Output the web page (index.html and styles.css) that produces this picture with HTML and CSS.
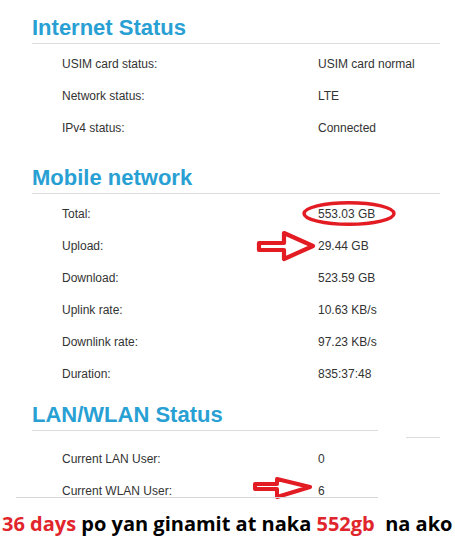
FILE: index.html
```html
<!DOCTYPE html>
<html>
<head>
<meta charset="utf-8">
<link rel="stylesheet" href="styles.css">
</head>
<body>
<div class="page">
  <section class="sec sec-internet">
    <h2 class="head">Internet Status</h2>
    <div class="rows">
      <div class="row"><div class="lbl">USIM card status:</div><div class="val">USIM card normal</div></div>
      <div class="row"><div class="lbl">Network status:</div><div class="val">LTE</div></div>
      <div class="row"><div class="lbl">IPv4 status:</div><div class="val">Connected</div></div>
    </div>
  </section>

  <section class="sec sec-mobile">
    <h2 class="head">Mobile network</h2>
    <div class="rows">
      <div class="row"><div class="lbl">Total:</div><div class="val">553.03 GB
        <svg class="mark mark-ellipse" width="100" height="32" viewBox="0 0 100 32"><ellipse cx="51" cy="15.5" rx="45" ry="10.8" fill="none" stroke="#e31b23" stroke-width="3.5"/></svg>
      </div></div>
      <div class="row"><div class="lbl">Upload:</div><div class="val">29.44 GB
        <svg class="mark mark-arrow1" width="62" height="32" viewBox="0 0 62 32"><path d="M3 13 L28 13 L28 3 L57 16 L28 29 L28 20 L3 20 Z" fill="#fff" stroke="#e31b23" stroke-width="4.2" stroke-linejoin="round"/></svg>
      </div></div>
      <div class="row"><div class="lbl">Download:</div><div class="val">523.59 GB</div></div>
      <div class="row"><div class="lbl">Uplink rate:</div><div class="val">10.63 KB/s</div></div>
      <div class="row"><div class="lbl">Downlink rate:</div><div class="val">97.23 KB/s</div></div>
      <div class="row"><div class="lbl">Duration:</div><div class="val">835:37:48</div></div>
    </div>
  </section>

  <section class="sec sec-lan">
    <div class="lan-head">
      <h2 class="head">LAN/WLAN Status</h2>
      <div class="stub"></div>
    </div>
    <div class="rows rows-lan">
      <div class="row"><div class="lbl">Current LAN User:</div><div class="val">0</div></div>
      <div class="row row-last"><div class="lbl">Current WLAN User:</div><div class="val">6
        <svg class="mark mark-arrow2" width="66" height="32" viewBox="0 0 66 32"><path d="M5 9 L27 9 L27 4 L60 12 L27 22 L27 14 L5 14 Z" fill="#fff" stroke="#e31b23" stroke-width="4" stroke-linejoin="round"/></svg>
      </div></div>
    </div>
  </section>
</div>
<p class="caption"><span class="red">36 days</span> po yan ginamit at naka <span class="red">552gb</span>&nbsp; na ako</p>
</body>
</html>
```
FILE: styles.css
```css
html, body {
  margin: 0;
  padding: 0;
  background: #fff;
}
body {
  width: 455px;
  height: 559px;
  overflow: hidden;
  font-family: "Liberation Sans", Arial, sans-serif;
}
.page {
  padding-left: 32px;
  width: 408px;
}
.sec-internet { padding-top: 15px; }
.sec-mobile { margin-top: 21px; }
.sec-lan { margin-top: 12px; }

.head {
  margin: 0;
  font-size: 22px;
  font-weight: bold;
  line-height: 26px;
  color: #29a0d3;
  padding-bottom: 2px;
  border-bottom: 1px solid #dddddd;
}
.lan-head {
  display: flex;
  align-items: flex-start;
}
.lan-head .head {
  width: 346px;
  flex: 0 0 346px;
}
.stub {
  margin-left: 28px;
  margin-top: 35px;
  width: 34px;
  border-top: 1px solid #dddddd;
}
.rows {
  margin-top: 4px;
  padding-left: 30px;
}
.rows-lan { margin-top: 5px; }
.row {
  display: grid;
  grid-template-columns: 256px auto;
  height: 32px;
  line-height: 32px;
  font-size: 12px;
  color: #333;
}
.val {
  position: relative;
}
.mark {
  position: absolute;
  top: 0;
  display: block;
}
.mark-ellipse { left: -20px; }
.mark-arrow1 { left: -62px; }
.mark-arrow2 { left: -68px; }
.row-last {
  position: relative;
}
.row-last::after {
  content: "";
  position: absolute;
  left: -46px;
  width: 362px;
  top: 22px;
  border-top: 1px solid #d6d6d6;
}
.caption {
  margin: 5px 0 0 2px;
  font-family: "Open Sans", Lato, sans-serif;
  font-weight: bold;
  font-size: 20px;
  line-height: 24px;
  letter-spacing: 0;
  color: #000;
  white-space: nowrap;
}
.red { color: #e1252d; }
```
